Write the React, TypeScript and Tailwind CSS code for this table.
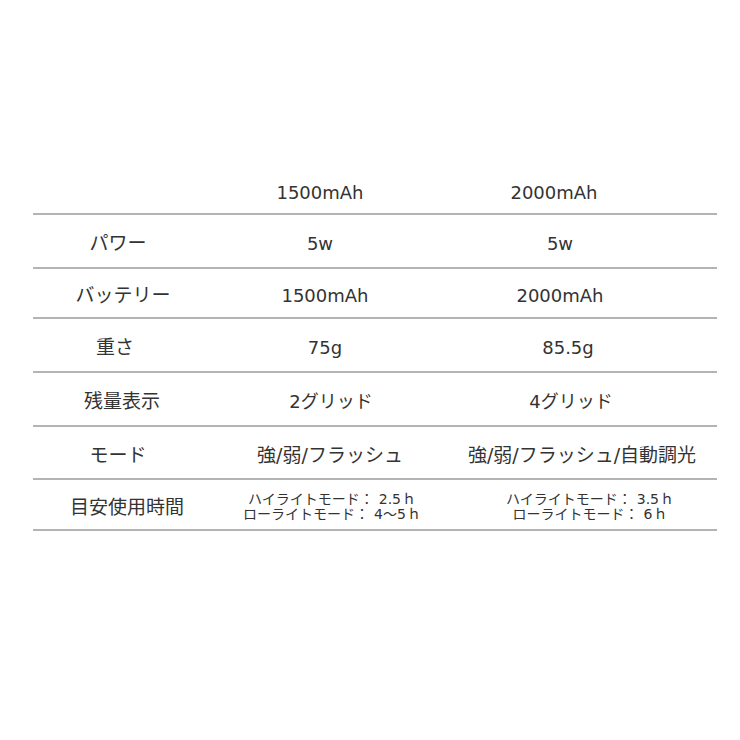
import React from "react";

type Row = {
  label: string;
  lc: string;
  a: React.ReactNode;
  ac: string;
  b: React.ReactNode;
  bc: string;
  h: number;
};

const Line = ({ l, n }: { l: string; n: string }) => (
  <div className="flex items-baseline">
    <span>{l}</span>
    <span>：</span>
    <span className="ml-[5px]">{n}</span>
    <span className="ml-[1px]">ｈ</span>
  </div>
);

const Small = ({ n1, n2 }: { n1: string; n2: string }) => (
  <div className="text-[14px] leading-[15px] whitespace-nowrap flex flex-col items-center">
    <Line l="ハイライトモード" n={n1} />
    <Line l="ローライトモード" n={n2} />
  </div>
);

const rows: Row[] = [
  { label: "パワー", lc: "pr-[4px]", a: "5w", ac: "pl-[0px] text-[18px]", b: "5w", bc: "pr-[10px] text-[18px]", h: 54 },
  { label: "バッテリー", lc: "pl-[6px]", a: "1500mAh", ac: "pl-[10px] text-[18px]", b: "2000mAh", bc: "pr-[10px] text-[18px]", h: 50 },
  { label: "重さ", lc: "pr-[10px]", a: "75g", ac: "pl-[10px] text-[18px]", b: "85.5g", bc: "pl-[6px] text-[18px]", h: 54 },
  { label: "残量表示", lc: "pl-[4px]", a: "2グリッド", ac: "pl-[22px] text-[18px]", b: "4グリッド", bc: "pl-[12px] text-[18px]", h: 54 },
  { label: "モード", lc: "pr-[4px]", a: "強/弱/フラッシュ", ac: "pl-[20px] text-[19px]", b: "強/弱/フラッシュ/自動調光", bc: "pl-[34px] text-[19px]", h: 53 },
  {
    label: "目安使用時間",
    lc: "pl-[14px]",
    a: <Small n1="2.5" n2="4～5" />,
    ac: "pl-[24px]",
    b: <Small n1="3.5" n2="6" />,
    bc: "pl-[50px]",
    h: 51,
  },
];

export default function App() {
  return (
    <div
      className="w-[740px] h-[740px] bg-white text-[#333333] pt-[169px] pl-[33px]"
      style={{ fontFamily: '"DejaVu Sans", "Noto Sans CJK JP", sans-serif' }}
    >
      <div className="w-[684px]">
        <div className="grid grid-cols-[174px_226px_264px_1fr] h-[46px] pt-[2px] items-center border-b-2 border-[#b4b4b4] text-[18px]">
          <div />
          <div className="text-center">1500mAh</div>
          <div className="text-center pr-[22px]">2000mAh</div>
          <div />
        </div>
        {rows.map((r, i) => (
          <div
            key={i}
            className="grid grid-cols-[174px_226px_264px_1fr] items-center pt-[5px] border-b-2 border-[#b4b4b4]"
            style={{ height: r.h }}
          >
            <div className={`flex justify-center whitespace-nowrap text-[19px] ${r.lc}`}>{r.label}</div>
            <div className={`flex justify-center whitespace-nowrap ${r.ac}`}>{r.a}</div>
            <div className={`flex justify-center whitespace-nowrap ${r.bc}`}>{r.b}</div>
            <div />
          </div>
        ))}
      </div>
    </div>
  );
}
